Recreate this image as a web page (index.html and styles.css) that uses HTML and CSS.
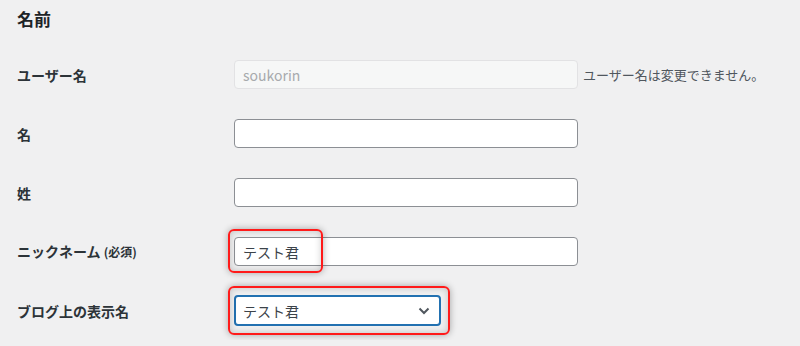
FILE: index.html
```html
<!DOCTYPE html>
<html lang="ja">
<head>
<meta charset="utf-8">
<title>名前</title>
<link rel="stylesheet" href="styles.css">
</head>
<body>
<div class="wrap">
  <h2 class="section-title">名前</h2>
  <div class="form-table">
    <div class="row">
      <label class="label">ユーザー名</label>
      <div class="field">
        <input class="text-input" type="text" value="soukorin" disabled>
        <span class="description">ユーザー名は変更できません。</span>
      </div>
    </div>
    <div class="row">
      <label class="label">名</label>
      <div class="field"><input class="text-input" type="text" value=""></div>
    </div>
    <div class="row">
      <label class="label">姓</label>
      <div class="field"><input class="text-input" type="text" value=""></div>
    </div>
    <div class="row">
      <label class="label">ニックネーム <span class="req">(必須)</span></label>
      <div class="field">
        <div class="hl-wrap">
          <input class="text-input" type="text" value="テスト君">
          <span class="highlight hl-nick"></span>
        </div>
      </div>
    </div>
    <div class="row">
      <label class="label">ブログ上の表示名</label>
      <div class="field">
        <div class="hl-wrap">
          <div class="select">
            <span class="select-value">テスト君</span>
            <svg class="chevron" width="12" height="8" viewBox="0 0 12 8"><path d="M1.5 1.5 L6 6 L10.5 1.5" fill="none" stroke="#50575e" stroke-width="2"/></svg>
          </div>
          <span class="highlight hl-select"></span>
        </div>
      </div>
    </div>
  </div>
</div>
</body>
</html>
```
FILE: styles.css
```css
html, body {
  margin: 0;
  padding: 0;
  background: #f0f0f1;
}
body {
  font-family: "Noto Sans CJK JP", "Noto Sans", sans-serif;
  color: #1d2327;
  font-size: 14px;
}
.wrap {
  padding: 7px 17px 0 17px;
}
.section-title {
  margin: 0 0 14px 0;
  font-size: 17px;
  line-height: 24px;
  font-weight: 700;
}
.form-table {
  display: flex;
  flex-direction: column;
}
.row {
  display: flex;
  align-items: center;
  padding: 15px 0;
  height: 29px;
}
.label {
  width: 217px;
  font-weight: 700;
  font-size: 14px;
  line-height: 20px;
  color: #2c3338;
}
.req {
  font-size: 12px;
}
.field {
  display: flex;
  align-items: center;
}
.text-input {
  box-sizing: border-box;
  width: 344px;
  height: 29px;
  margin: 0;
  padding: 0 8px;
  border: 1px solid #8c8f94;
  border-radius: 4px;
  background: #fff;
  font-family: inherit;
  font-size: 14px;
  color: #3c434a;
  outline: none;
}
.text-input:disabled {
  background: #f6f7f7;
  border-color: #e2e2e4;
  color: #a7aaad;
}
.description {
  margin-left: 5px;
  font-size: 13px;
  color: #50575e;
}
.hl-wrap {
  position: relative;
}
.select {
  box-sizing: border-box;
  width: 207px;
  height: 31px;
  border: 2px solid #2271b1;
  border-radius: 4px;
  background: #fff;
  display: flex;
  align-items: center;
  justify-content: space-between;
  padding: 0 9px 0 7px;
  font-size: 14px;
  color: #3c434a;
}
.highlight {
  position: absolute;
  box-sizing: border-box;
  border: 2px solid #ff1a1a;
  border-radius: 6px;
  box-shadow: 0 0 7px rgba(0, 0, 0, 0.32), inset 0 0 7px rgba(0, 0, 0, 0.2);
  pointer-events: none;
}
.hl-nick {
  left: -6px;
  top: -8px;
  width: 95px;
  height: 44px;
}
.hl-select {
  left: -6px;
  top: -9px;
  width: 222px;
  height: 49px;
}
```
